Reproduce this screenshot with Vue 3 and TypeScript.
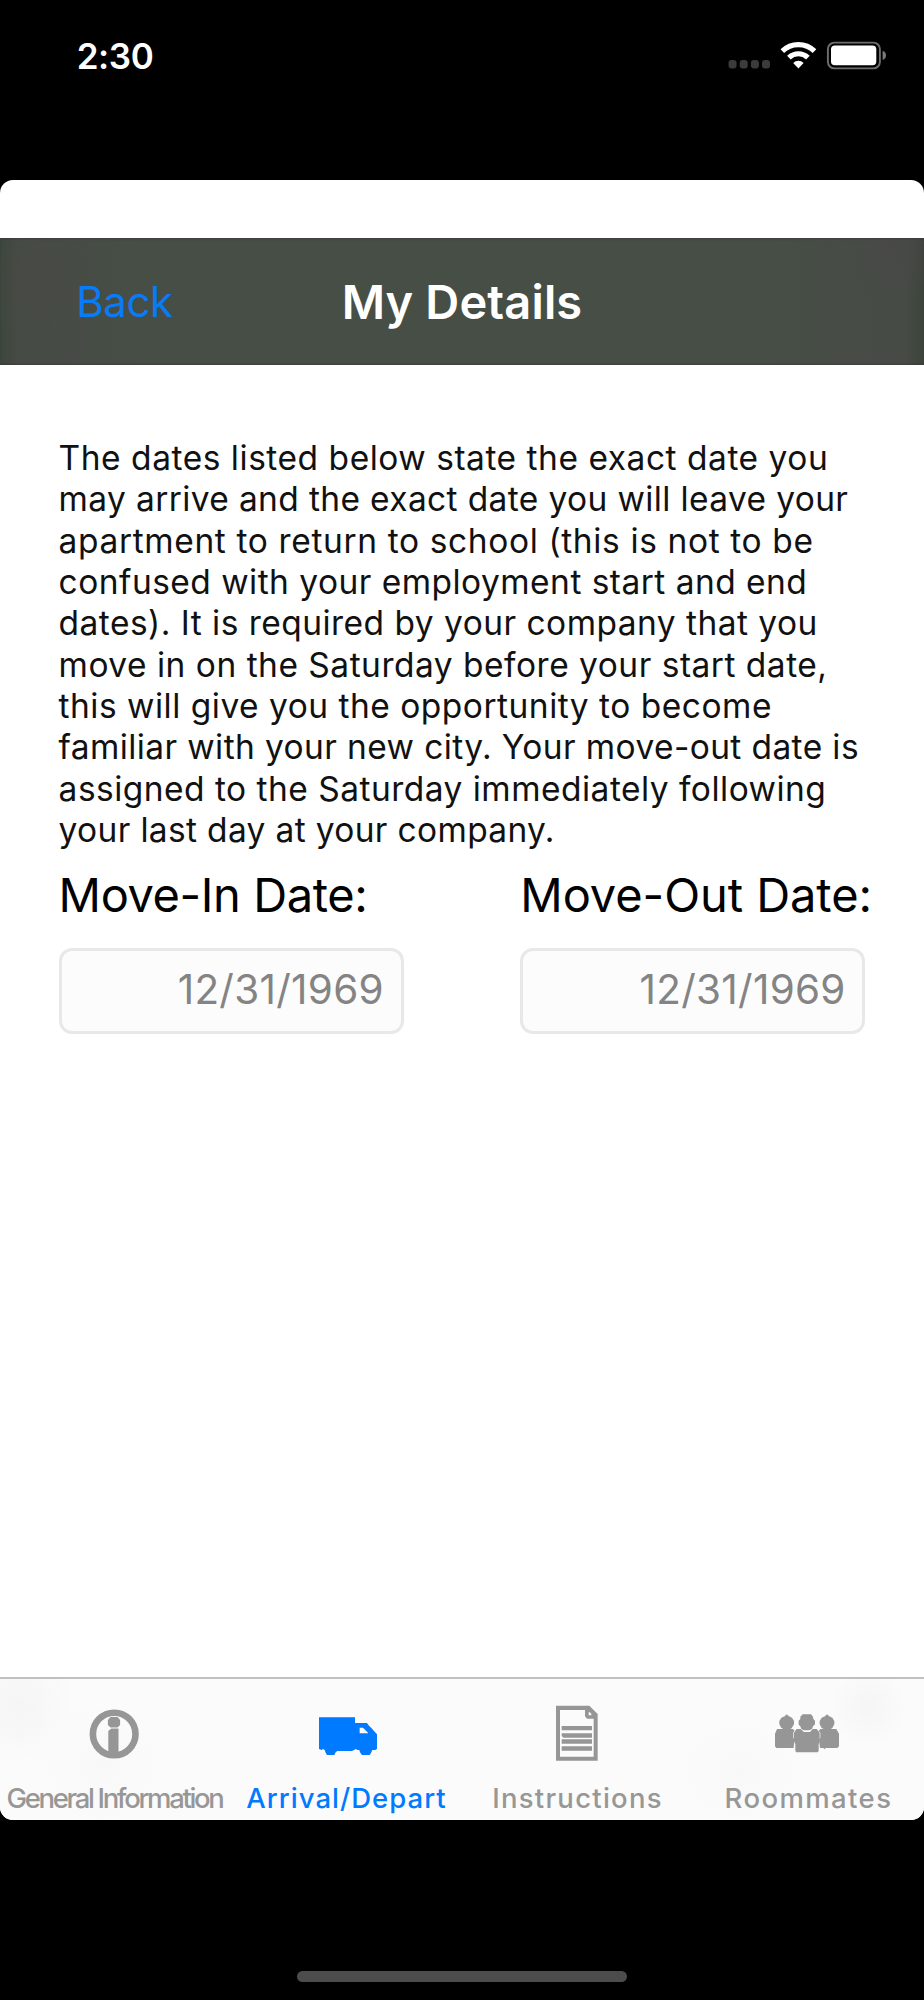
<script setup lang="ts">
interface Line { text: string; spacing: number }
interface DateField { id: string; label: string; value: string }

const lines: Line[] = [
  { text: 'The dates listed below state the exact date you', spacing: 0.53 },
  { text: 'may arrive and the exact date you will leave your', spacing: 0.37 },
  { text: 'apartment to return to school (this is not to be', spacing: 0.63 },
  { text: 'confused with your employment start and end', spacing: 0.47 },
  { text: 'dates). It is required by your company that you', spacing: 0.47 },
  { text: 'move in on the Saturday before your start date,', spacing: 0.5 },
  { text: 'this will give you the opportunity to become', spacing: 0.5 },
  { text: 'familiar with your new city. Your move-out date is', spacing: 0.39 },
  { text: 'assigned to the Saturday immediately following', spacing: 0.48 },
  { text: 'your last day at your company.', spacing: 0.34 },
]

const fields: DateField[] = [
  { id: 'in', label: 'Move-In Date:', value: '12/31/1969' },
  { id: 'out', label: 'Move-Out Date:', value: '12/31/1969' },
]
</script>

<template>
  <div class="screen">
    <header class="status">
      <span class="time">2:30</span>
      <svg class="indicators" viewBox="700 30 200 50" width="200" height="50">
        <g fill="#3b3b3b">
          <rect x="728.5" y="60" width="8" height="8.5" rx="3" />
          <rect x="739.7" y="60" width="8" height="8.5" rx="3" />
          <rect x="750.9" y="60" width="8" height="8.5" rx="3" />
          <rect x="762" y="60" width="8" height="8.5" rx="3" />
        </g>
        <g fill="none" stroke="#fff" stroke-width="5.2">
          <path d="M782.3 51.2a23 23 0 0 1 32.2 0" />
          <path d="M788.9 57.6a13.7 13.7 0 0 1 19 0" />
        </g>
        <path fill="#fff" d="M793.2 62.9a7.5 7.5 0 0 1 10.4 0L798.4 68.6z" />
        <rect x="827.9" y="42.6" width="52" height="25.8" rx="6.5" fill="none" stroke="#6e6e6e" stroke-width="1.9" />
        <rect x="831" y="45.5" width="45.3" height="19.7" rx="3.8" fill="#fff" />
        <path fill="#7a7a7a" d="M882.6 50.8q3.4 1.4 3.4 4.6t-3.4 4.6z" />
      </svg>
    </header>

    <main class="sheet">
      <nav class="navbar">
        <a class="back">Back</a>
        <h1 class="title">My Details</h1>
      </nav>

      <section class="content">
        <p class="intro">
          <span v-for="line in lines" :key="line.text" class="line" :style="{ letterSpacing: line.spacing + 'px' }">{{ line.text }}</span>
        </p>
        <div class="dates">
          <div v-for="f in fields" :key="f.id" class="date">
            <label class="label" :class="f.id">{{ f.label }}</label>
            <div class="field">{{ f.value }}</div>
          </div>
        </div>
      </section>

      <footer class="tabs">
        <div class="tab">
          <svg viewBox="0 1679 231 100" width="231" height="100">
            <circle cx="114.2" cy="1734" r="21.3" fill="none" stroke="#969696" stroke-width="6.6" />
            <path fill="#969696" d="M110.5 1717h7l2.6 3v5l-2.6 2.6h-7l-2.6-2.6v-5zM108.3 1731l3-2.6h7.2v26h-10.2z" />
          </svg>
          <span class="caption general">General Information</span>
        </div>
        <div class="tab active">
          <svg viewBox="231 1679 231 100" width="231" height="100">
            <g transform="translate(300 1700) scale(.33333)">
              <path fill="#007aff" fill-rule="evenodd" d="M57 52H165V69H201L207 77L214 84L222 93L231 103V146L226 150H217L213 159L209 165H186L180 157L178 150H172L168 147L162 150L156 153H112L107 157L103 165H81L77 158L74 150L69 147L65 150L57 147ZM179 83H189L204 98V100H179Z" />
            </g>
          </svg>
          <span class="caption arrival">Arrival/Depart</span>
        </div>
        <div class="tab">
          <svg viewBox="462 1679 231 100" width="231" height="100">
            <g transform="translate(540 1695) scale(.33333)">
              <path fill="#969696" fill-rule="evenodd" d="M48 32H148L173 57V197H48ZM60 45V185H161V71H141L135 64V45ZM146 52V61H154V57L150 52Z" />
              <path fill="#969696" d="M65 93H156V106H65ZM65 115H156V128H70L65 122ZM65 133H156V146H65ZM65 154H156V167H65Z" />
            </g>
          </svg>
          <span class="caption instructions">Instructions</span>
        </div>
        <div class="tab">
          <svg viewBox="693 1679 231 100" width="231" height="100">
            <g transform="translate(760 1700) scale(.33333)" fill="#969696">
              <path d="M74 49L80 43L87 49L96 53L102 63V73L95 85L89 88V92L85 88H74L70 92V87L64 84L58 73V63L64 53Z" />
              <path d="M195 49L201 43L208 49L217 53L223 63V73L217 84L211 88V92L206 88H195L191 92V87L185 84L179 73V63L185 53Z" />
              <path d="M51 87H99L104 92L100 97V113L103 118L101 144H49L45 139V101Z" />
              <path d="M182 87H229L237 101V139L232 144H197L194 148L190 144H180L177 119L181 113V98L176 92Z" />
              <path d="M128 43H153L159 50L160 57L165 62V73L159 79L156 87L147 91H132L124 87L121 79L116 74V62L121 57V50Z" />
              <path d="M110 87H122L132 96H150L158 87H170L179 98V123L176 133V153L173 157H109L106 153V133L102 124V98Z" />
            </g>
          </svg>
          <span class="caption roommates">Roommates</span>
        </div>
      </footer>
    </main>

    <div class="home"><span class="bar"></span></div>
  </div>
</template>

<style>
body { margin: 0; background: #000; }
</style>

<style scoped>
.screen {
  width: 924px;
  height: 2000px;
  background: #000;
  display: flex;
  flex-direction: column;
  overflow: hidden;
  font-family: Inter, "Liberation Sans", sans-serif;
}
.status {
  box-sizing: border-box;
  height: 179.7px;
  flex: none;
  padding: 30px 24px 0 76.7px;
  display: flex;
  justify-content: space-between;
  align-items: flex-start;
}
.time {
  color: #fff;
  font-size: 35px;
  font-weight: 600;
  line-height: 40px;
  letter-spacing: -0.4px;
  margin-top: 6px;
}
.sheet {
  height: 1640.3px;
  flex: none;
  background: #fff;
  border-radius: 13px;
  overflow: hidden;
  display: flex;
  flex-direction: column;
}
.navbar {
  margin-top: 58px;
  height: 127.3px;
  flex: none;
  display: grid;
  grid-template-columns: 1fr auto 1fr;
  align-items: center;
  background:
    radial-gradient(ellipse 50px 50px at 97% 12%, rgba(74, 70, 71, .6), transparent),
    radial-gradient(ellipse 60px 60px at 5% 35%, rgba(74, 73, 69, .4), transparent),
    linear-gradient(90deg, #3d463d 0, #464b45 18px, #464e45 130px, #464e45 780px, #474c46 850px, #464c45 905px, #3c443c 924px);
  box-shadow: inset 0 2px 2px -1px rgba(50, 50, 50, .5), inset 0 -2px 2px -1px rgba(50, 50, 50, .5);
}
.back {
  color: #087bf5;
  font-size: 42px;
  padding-left: 76.2px;
  letter-spacing: -0.4px;
}
.title {
  margin: 0;
  color: #fff;
  font-size: 47px;
  font-weight: 600;
  letter-spacing: 0.15px;
  white-space: nowrap;
}
.content {
  flex: 1;
  padding: 73px 58.6px 0;
}
.intro {
  margin: 0;
  color: #111;
  font-size: 33.5px;
  line-height: 41.35px;
}
.line {
  display: block;
  width: max-content;
  white-space: nowrap;
}
.dates {
  display: flex;
  gap: 116.8px;
  margin-top: 19px;
}
.date { width: 345.1px; }
.label {
  display: block;
  width: max-content;
  color: #000;
  font-size: 47px;
  line-height: 50px;
  white-space: nowrap;
}
.in { letter-spacing: -0.4px; }
.out { letter-spacing: -0.08px; }
.field {
  box-sizing: border-box;
  margin-top: 27.7px;
  height: 85.7px;
  border: 3px solid #e8e8e8;
  border-radius: 13px;
  background: #fcfcfc;
  padding: 0 16.7px 2px 0;
  display: flex;
  align-items: center;
  justify-content: flex-end;
  color: #848484;
  font-size: 40.4px;
  letter-spacing: 0.3px;
}
.tabs {
  box-sizing: border-box;
  height: 143px;
  flex: none;
  border-top: 2px solid #c0c0c0;
  background:
    radial-gradient(ellipse 40px 40px at 94% 20%, #f5f5f5, transparent),
    radial-gradient(ellipse 60px 50px at 80% 65%, #f8f8f8, transparent),
    radial-gradient(ellipse 60px 60px at 2% 20%, #f5f5f5, transparent),
    radial-gradient(ellipse 60px 60px at 11% 60%, #f8f8f8, transparent),
    #fbfbfb;
  display: grid;
  grid-template-columns: repeat(4, 231px);
}
.tab {
  display: flex;
  flex-direction: column;
  align-items: center;
  color: #979797;
}
.tab svg { display: block; flex: none; }
.active { color: #007aff; }
.caption {
  font-size: 27.5px;
  font-weight: 500;
  line-height: 39px;
  white-space: nowrap;
}
.general { letter-spacing: -2.35px; margin-right: 2px; }
.arrival { letter-spacing: 1.03px; }
.instructions { letter-spacing: 1.27px; }
.roommates { letter-spacing: 1.4px; }
.home {
  flex: 1;
  display: flex;
  align-items: flex-end;
  justify-content: center;
  padding-bottom: 18px;
}
.bar {
  width: 330px;
  height: 11px;
  border-radius: 6px;
  background: #4c4c4c;
}
</style>
